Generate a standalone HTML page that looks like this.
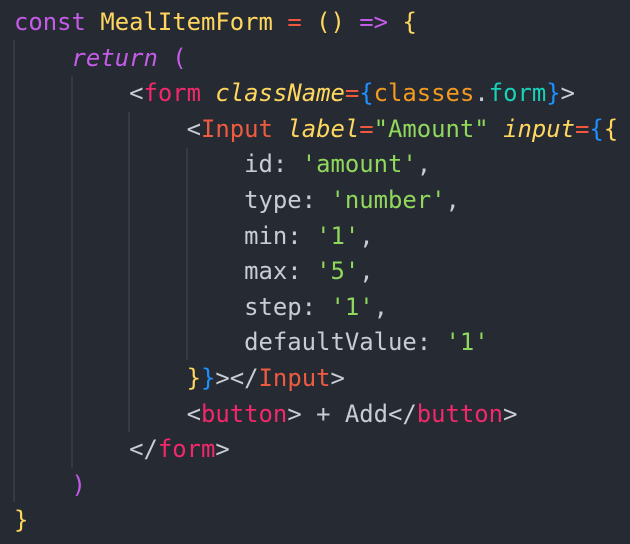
<!DOCTYPE html>
<html><head><style>
html,body{margin:0;padding:0;background:#262a33;width:630px;height:544px;overflow:hidden}
.c{position:absolute;left:14px;top:5px;font-family:"DejaVu Sans Mono","Liberation Mono",monospace;font-size:23.9px;line-height:35.6px;white-space:pre;color:#d7dae0}
.g{position:absolute;width:2px;background:#363a44}
.k{color:#c45ce8}.y{color:#ffd75e}.r{color:#f0583e}.i{font-style:italic}
.t{color:#f2286b}.T{color:#ef5b3f}.a{color:#ffd75e;font-style:italic}
.s{color:#8fd85c}.b{color:#1e90ff}.o{color:#f39a1f}.cy{color:#18d1b6}.p{color:#c9ccd3}
</style></head><body>
<div class="g" style="left:13px;top:40px;height:462px"></div>
<div class="g" style="left:71px;top:76px;height:392px"></div>
<div class="g" style="left:128px;top:112px;height:320px"></div>
<div class="g" style="left:186px;top:148px;height:212px"></div>
<div class="c"><span class="k">const</span> <span class="y">MealItemForm</span> <span class="r">=</span> <span class="y">()</span> <span class="k">=&gt;</span> <span class="y">{</span>
    <span class="k i">return</span> <span class="k">(</span>
        <span class="p">&lt;</span><span class="t">form</span> <span class="a">className</span><span class="r">=</span><span class="b">{</span><span class="o">classes</span><span class="p">.</span><span class="cy">form</span><span class="b">}</span><span class="p">&gt;</span>
            <span class="p">&lt;</span><span class="T">Input</span> <span class="a">label</span><span class="r">=</span><span class="s">"Amount"</span> <span class="a">input</span><span class="r">=</span><span class="b">{</span><span class="y">{</span>
                <span class="p">id:</span> <span class="s">'amount'</span><span class="p">,</span>
                <span class="p">type:</span> <span class="s">'number'</span><span class="p">,</span>
                <span class="p">min:</span> <span class="s">'1'</span><span class="p">,</span>
                <span class="p">max:</span> <span class="s">'5'</span><span class="p">,</span>
                <span class="p">step:</span> <span class="s">'1'</span><span class="p">,</span>
                <span class="p">defaultValue:</span> <span class="s">'1'</span>
            <span class="y">}</span><span class="b">}</span><span class="p">&gt;&lt;/</span><span class="T">Input</span><span class="p">&gt;</span>
            <span class="p">&lt;</span><span class="t">button</span><span class="p">&gt; + Add&lt;/</span><span class="t">button</span><span class="p">&gt;</span>
        <span class="p">&lt;/</span><span class="t">form</span><span class="p">&gt;</span>
    <span class="k">)</span>
<span class="y">}</span></div>
</body></html>
